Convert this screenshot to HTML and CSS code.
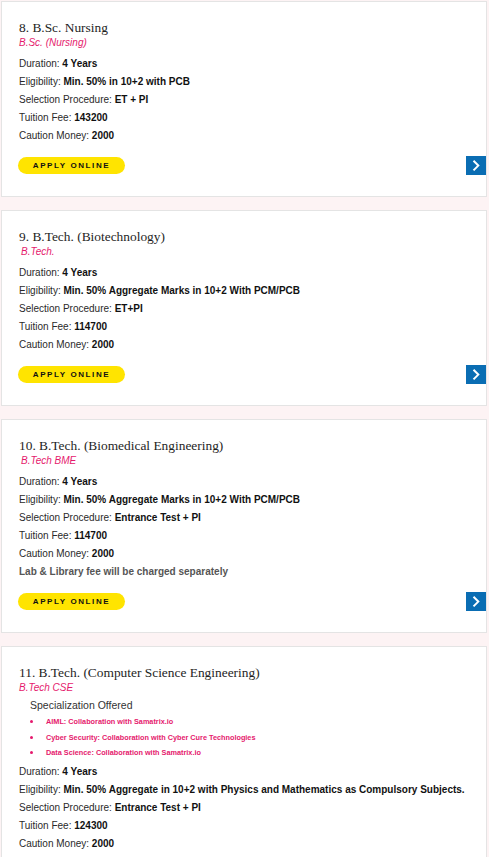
FILE: index.html
```html
<!DOCTYPE html>
<html>
<head>
<meta charset="utf-8">
<link rel="stylesheet" href="styles.css">
</head>
<body>
<div class="list">
  <div class="card">
    <div class="inner">
      <h3 class="title">8. B.Sc. Nursing</h3>
      <p class="sub">B.Sc. (Nursing)</p>
      <div class="rows">
        <p>Duration: <b>4 Years</b></p>
        <p>Eligibility: <b>Min. 50% in 10+2 with PCB</b></p>
        <p>Selection Procedure: <b>ET + PI</b></p>
        <p>Tuition Fee: <b>143200</b></p>
        <p>Caution Money: <b>2000</b></p>
      </div>
    </div>
    <div class="foot">
      <a class="apply">APPLY ONLINE</a>
      <span class="arrow"><svg width="20" height="19" viewBox="0 0 20 19"><path d="M7.5 4.8 L12.3 9.6 L7.5 14.4" fill="none" stroke="#fff" stroke-width="2"/></svg></span>
    </div>
  </div>

  <div class="card">
    <div class="inner">
      <h3 class="title">9. B.Tech. (Biotechnology)</h3>
      <p class="sub sub-in">B.Tech.</p>
      <div class="rows">
        <p>Duration: <b>4 Years</b></p>
        <p>Eligibility: <b>Min. 50% Aggregate Marks in 10+2 With PCM/PCB</b></p>
        <p>Selection Procedure: <b>ET+PI</b></p>
        <p>Tuition Fee: <b>114700</b></p>
        <p>Caution Money: <b>2000</b></p>
      </div>
    </div>
    <div class="foot">
      <a class="apply">APPLY ONLINE</a>
      <span class="arrow"><svg width="20" height="19" viewBox="0 0 20 19"><path d="M7.5 4.8 L12.3 9.6 L7.5 14.4" fill="none" stroke="#fff" stroke-width="2"/></svg></span>
    </div>
  </div>

  <div class="card">
    <div class="inner">
      <h3 class="title">10. B.Tech. (Biomedical Engineering)</h3>
      <p class="sub sub-in">B.Tech BME</p>
      <div class="rows">
        <p>Duration: <b>4 Years</b></p>
        <p>Eligibility: <b>Min. 50% Aggregate Marks in 10+2 With PCM/PCB</b></p>
        <p>Selection Procedure: <b>Entrance Test + PI</b></p>
        <p>Tuition Fee: <b>114700</b></p>
        <p>Caution Money: <b>2000</b></p>
        <p class="note">Lab &amp; Library fee will be charged separately</p>
      </div>
    </div>
    <div class="foot">
      <a class="apply">APPLY ONLINE</a>
      <span class="arrow"><svg width="20" height="19" viewBox="0 0 20 19"><path d="M7.5 4.8 L12.3 9.6 L7.5 14.4" fill="none" stroke="#fff" stroke-width="2"/></svg></span>
    </div>
  </div>

  <div class="card">
    <div class="inner">
      <h3 class="title">11. B.Tech. (Computer Science Engineering)</h3>
      <p class="sub">B.Tech CSE</p>
      <p class="spec">Specialization Offered</p>
      <ul class="bullets">
        <li>AIML: Collaboration with Samatrix.io</li>
        <li>Cyber Security: Collaboration with Cyber Cure Technologies</li>
        <li>Data Science: Collaboration with Samatrix.io</li>
      </ul>
      <div class="rows rows-after">
        <p>Duration: <b>4 Years</b></p>
        <p>Eligibility: <b>Min. 50% Aggregate in 10+2 with Physics and Mathematics as Compulsory Subjects.</b></p>
        <p>Selection Procedure: <b>Entrance Test + PI</b></p>
        <p>Tuition Fee: <b>124300</b></p>
        <p>Caution Money: <b>2000</b></p>
      </div>
    </div>
  </div>
</div>
</body>
</html>
```

FILE: styles.css
```css
html, body {
  margin: 0;
  padding: 0;
  background: #fdf3f4;
}
.list {
  padding: 1px 2px 0 1px;
  display: flex;
  flex-direction: column;
  gap: 13px;
}
.card {
  background: #fff;
  border: 1px solid #e4e4e4;
  padding: 17px 0 21px 17px;
}
.inner {
  padding-right: 10px;
}
.title {
  margin: 0;
  font-family: "Liberation Serif", "Times New Roman", serif;
  font-weight: normal;
  font-size: 13.4px;
  line-height: 18px;
  color: #1e1e1e;
}
.sub {
  margin: -1px 0 0 0;
  font-family: "Liberation Sans", Arial, sans-serif;
  font-style: italic;
  font-size: 10px;
  line-height: 14px;
  color: #e5196d;
}
.sub-in {
  padding-left: 2px;
}
.rows {
  margin-top: 5px;
  font-family: "Liberation Sans", Arial, sans-serif;
  font-size: 10px;
  line-height: 18px;
  color: #2a2a2a;
}
.rows-after {
  margin-top: 2px;
}
.rows p {
  margin: 0;
}
.rows b {
  color: #111;
}
.rows .note {
  font-weight: bold;
  color: #555;
}
.spec {
  margin: 3px 0 0 11px;
  font-family: "Liberation Sans", Arial, sans-serif;
  font-size: 10.5px;
  line-height: 14px;
  color: #333;
}
.bullets {
  margin: 2px 0 0 0;
  padding: 0 0 0 23px;
  font-family: "Liberation Sans", Arial, sans-serif;
  font-size: 7.3px;
  font-weight: bold;
  line-height: 14.5px;
  color: #e5196d;
}
.bullets li {
  padding-left: 4px;
}
.bullets li::marker {
  font-size: 9px;
}
.foot {
  margin-top: 11px;
  display: flex;
  align-items: center;
  justify-content: space-between;
}
.apply {
  display: flex;
  align-items: center;
  justify-content: center;
  width: 107px;
  height: 17px;
  margin-left: -1px;
  background: #ffe400;
  border-radius: 9px;
  font-family: "Liberation Sans", Arial, sans-serif;
  font-size: 8px;
  font-weight: bold;
  letter-spacing: 1.6px;
  color: #111;
  box-sizing: border-box;
}
.arrow {
  display: block;
  width: 20px;
  height: 19px;
  background: #0a6db3;
}
.arrow svg {
  display: block;
}
```
